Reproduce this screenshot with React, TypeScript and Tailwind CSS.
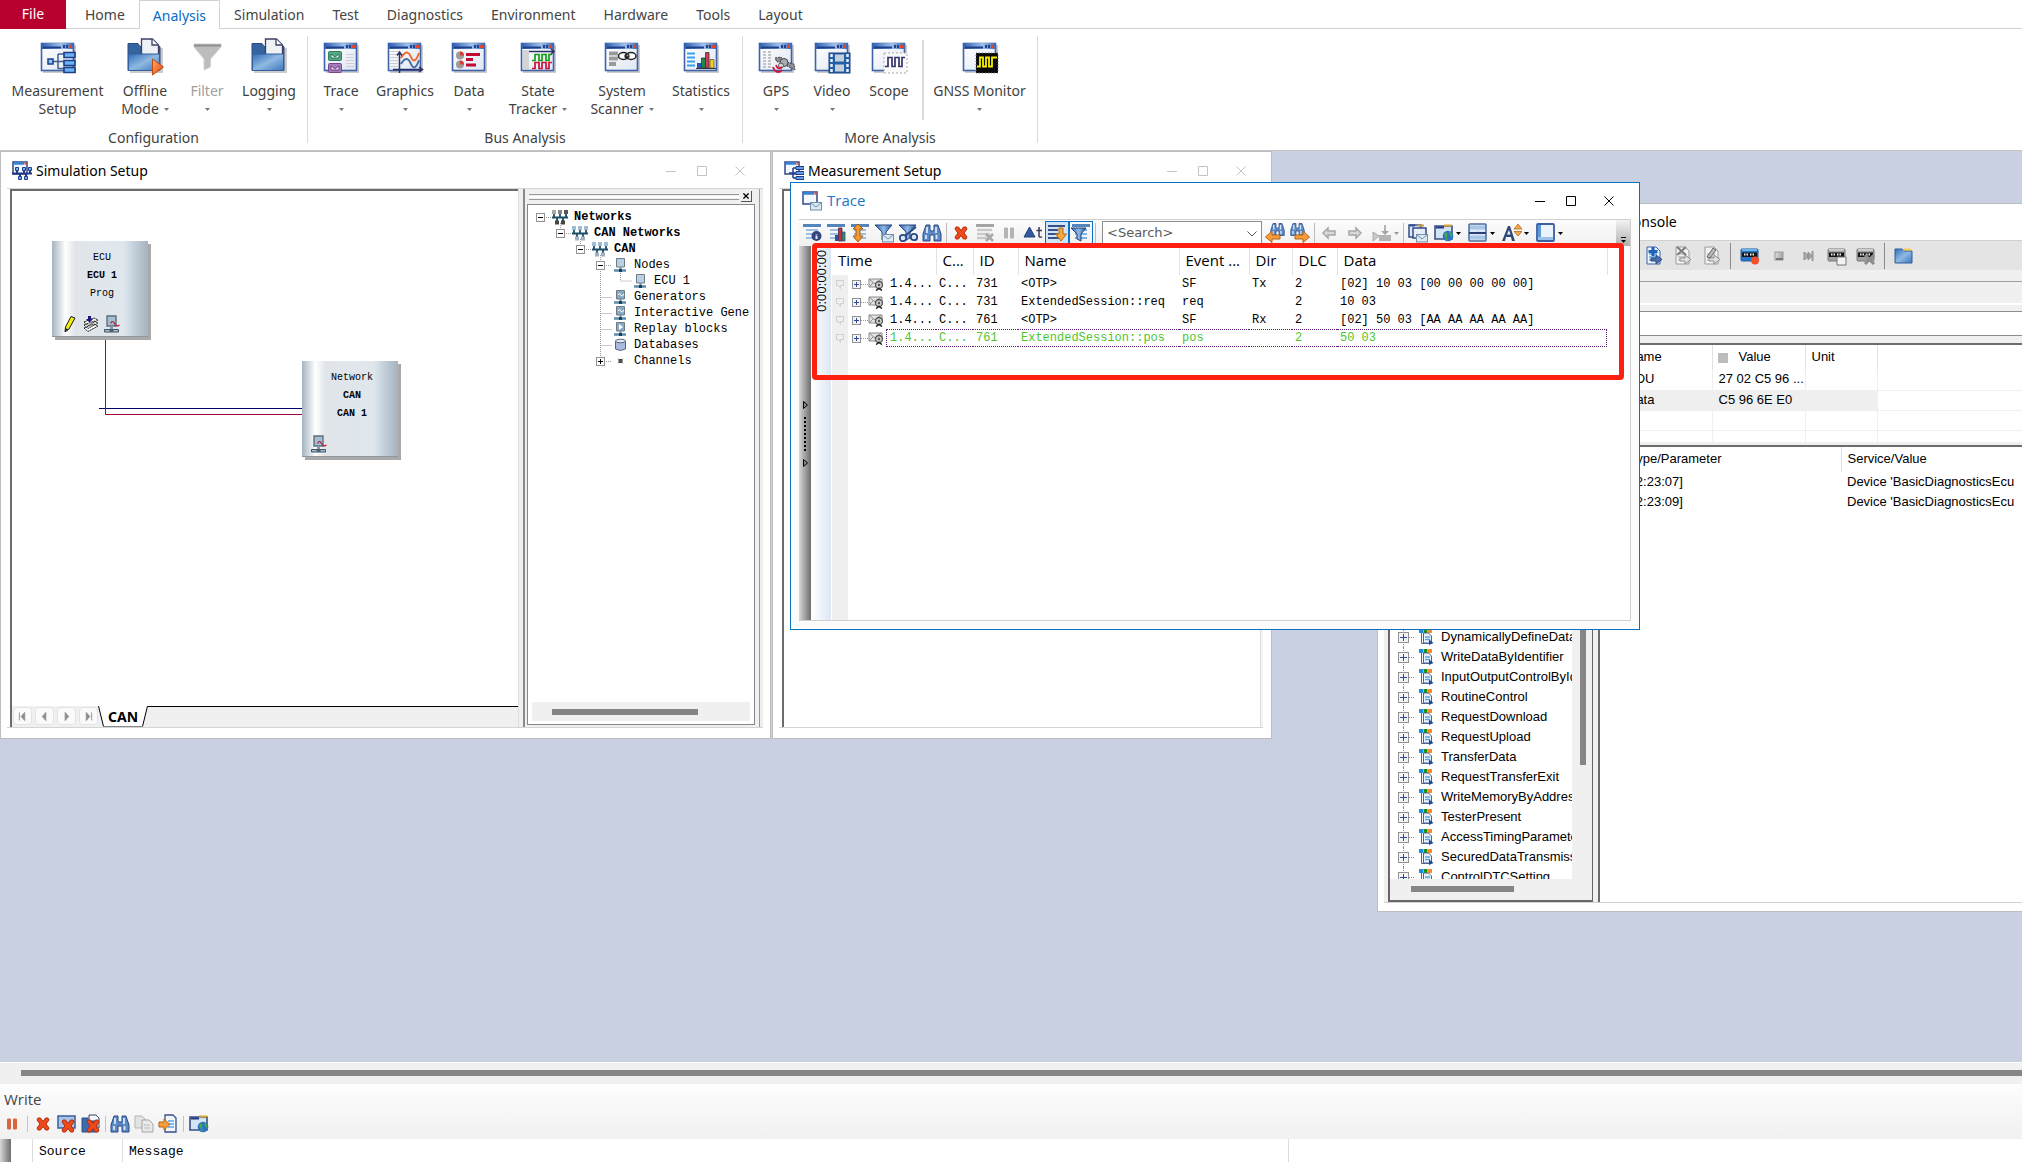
import React from 'react';

const RIBBON_TABS = ['Home', 'Analysis', 'Simulation', 'Test', 'Diagnostics', 'Environment', 'Hardware', 'Tools', 'Layout'];

const SERVICES = [
  'DynamicallyDefineDataIdentifier',
  'WriteDataByIdentifier',
  'InputOutputControlByIdentifier',
  'RoutineControl',
  'RequestDownload',
  'RequestUpload',
  'TransferData',
  'RequestTransferExit',
  'WriteMemoryByAddress',
  'TesterPresent',
  'AccessTimingParameter',
  'SecuredDataTransmission',
  'ControlDTCSetting',
];

interface TraceRow {
  id: string;
  name: string;
  event: string;
  dir: string;
  data: string;
  selected?: boolean;
}

const TRACE_ROWS: TraceRow[] = [
  { id: '731', name: '<OTP>', event: 'SF', dir: 'Tx', data: '[02] 10 03 [00 00 00 00 00]' },
  { id: '731', name: 'ExtendedSession::req', event: 'req', dir: '', data: '10 03' },
  { id: '761', name: '<OTP>', event: 'SF', dir: 'Rx', data: '[02] 50 03 [AA AA AA AA AA]' },
  { id: '761', name: 'ExtendedSession::pos', event: 'pos', dir: '', data: '50 03', selected: true },
];

// Shared gradients, referenced by id from the icons
const Gradients: React.FC = () => (
  <svg className="absolute h-0 w-0" aria-hidden="true">
    <defs>
      <linearGradient id="gBody" x1="0" y1="0" x2="1" y2="1">
        <stop offset="0" stopColor="#ffffff" />
        <stop offset="1" stopColor="#dfe6f4" />
      </linearGradient>
      <linearGradient id="gBar" x1="0" y1="0" x2="1" y2="0">
        <stop offset="0" stopColor="#2d5fae" />
        <stop offset="0.6" stopColor="#9ec0ea" />
        <stop offset="1" stopColor="#3c63ad" />
      </linearGradient>
      <linearGradient id="gBlue" x1="0" y1="0" x2="1" y2="1">
        <stop offset="0" stopColor="#2f6db8" />
        <stop offset="0.5" stopColor="#8fb9e2" />
        <stop offset="1" stopColor="#3c78bd" />
      </linearGradient>
      <linearGradient id="gFunnel" x1="0" y1="0" x2="1" y2="0">
        <stop offset="0" stopColor="#2f62a8" />
        <stop offset="0.5" stopColor="#8db8e6" />
        <stop offset="1" stopColor="#2c5a9e" />
      </linearGradient>
      <linearGradient id="gGray" x1="0" y1="0" x2="1" y2="0">
        <stop offset="0" stopColor="#dcdcdc" />
        <stop offset="1" stopColor="#a4a4a4" />
      </linearGradient>
      <linearGradient id="gOrange" x1="0" y1="0" x2="1" y2="1">
        <stop offset="0" stopColor="#ffb46a" />
        <stop offset="1" stopColor="#ea3c00" />
      </linearGradient>
    </defs>
  </svg>
);

type KidsProps = { children?: React.ReactNode };

const Ico: React.FC<KidsProps> = ({ children }) => (
  <svg viewBox="0 0 20 20" className="h-5 w-5 shrink-0" aria-hidden="true">{children}</svg>
);

const BigIco: React.FC<KidsProps> = ({ children }) => (
  <svg viewBox="0 0 38 34" className="h-[34px] w-[38px] shrink-0 overflow-visible" aria-hidden="true">{children}</svg>
);

const BigWindow: React.FC<KidsProps> = ({ children }) => (
  <BigIco>
    <rect x="4" y="5" width="33" height="28" fill="#000" opacity="0.2" />
    <rect x="2.5" y="3.5" width="32" height="27" fill="url(#gBody)" stroke="#3f62a8" strokeWidth="1.6" />
    <rect x="2" y="3" width="33" height="6" fill="url(#gBar)" />
    <path d="M4 7.5h18" stroke="#1e3f8c" strokeWidth="2" />
    <path d="M24 6.5h2M27 6.5h2" stroke="#23408a" strokeWidth="3" />
    <rect x="30" y="5" width="3" height="3" fill="#e2432a" />
    {children}
  </BigIco>
);

const BigFolder: React.FC<KidsProps> = ({ children }) => (
  <BigIco>
    <rect x="4" y="8" width="33" height="25" fill="#000" opacity="0.2" />
    <path d="M2 3.500h10l2 3h20v24H2z" fill="#35659f" stroke="#2b4c86" />
    <path d="M15.500 -1h11l6 6v15h-17z" fill="#eef1f6" stroke="#3b3f66" strokeWidth="1.300" />
    <path d="M26 -1v6h6" fill="#fff" stroke="#3b3f66" strokeWidth="1.300" />
    <path d="M2.500 14h31v16.500h-31z" fill="url(#gBlue)" stroke="#345e9c" />
    {children}
  </BigIco>
);

const MeasurementBig = () => (
  <BigWindow>
    <path d="M12 21.500h14M19 14v15M19 14h7M19 28.500h7" stroke="#44608f" strokeWidth="1.500" fill="none" />
    <rect x="9" y="19" width="5" height="5" fill="#8cc4f8" stroke="#1d3f86" strokeWidth="1.500" />
    <path d="M25 12.500h11v5H25zM25 20.500h11v5H25zM25 27.500h11v5H25z" fill="#6db2f6" stroke="#1d3f86" strokeWidth="1.600" />
  </BigWindow>
);

const OfflineBig = () => (
  <BigFolder>
    <path d="M26.500 19l11 8-11 8z" fill="url(#gOrange)" stroke="#c14a12" />
  </BigFolder>
);

const FilterBig = () => (
  <BigIco>
    <path d="M6 4h27v3L22.500 19v8L16 30V19L6 7z" fill="#bdbdbd" stroke="#d2d2d2" />
    <path d="M6 5.500h27" stroke="#8f8f8f" strokeWidth="2" />
  </BigIco>
);

const TraceBig = () => (
  <BigWindow>
    <path d="M24 14.500h8M24 17.500h8M24 20.500h8M24 23.500h8M24 26.500h8" stroke="#cfcfcf" />
    <rect x="6.500" y="11.500" width="13" height="9" rx="1" fill="#53a985" stroke="#2f7c5c" />
    <path d="M9 14l4 3 4-3v4H9z" fill="#d6f1e5" stroke="#235f48" strokeWidth="0.800" />
    <rect x="6.500" y="23.500" width="13" height="9" rx="1" fill="#a37bb8" stroke="#73488b" />
    <path d="M9 26l4 3 4-3v4H9z" fill="#f1e2f8" stroke="#5a336f" strokeWidth="0.800" />
  </BigWindow>
);

const GraphicsBig = () => (
  <BigWindow>
    <path d="M4 11.500h8M4 14.500h8M4 17.500h8M4 20.500h8M4 23.500h8M4 26.500h8" stroke="#c9ccd3" />
    <path d="M15 18c5-8 8-6 10-1s5 5 8-4" fill="none" stroke="#f36a2a" strokeWidth="2" />
    <path d="M15 24c5-8 8-5 10 0s5 5 8-4" fill="none" stroke="#4a6da2" strokeWidth="2" />
    <path d="M13.500 33V13M11 15.500l2.500-3.500 2.500 3.500M7 29.500h28M33 27l3.500 2.500L33 32" fill="none" stroke="#2a2f68" strokeWidth="1.500" />
  </BigWindow>
);

const DataBig = () => (
  <BigWindow>
    <circle cx="10" cy="15.500" r="4" fill="#9c9c9c" /><path d="M10 15.500v-4a4 4 0 0 1 4 4z" fill="#d93a3a" />
    <circle cx="10" cy="24.500" r="4" fill="#9c9c9c" /><path d="M10 24.500v-4a4 4 0 0 1 4 4z" fill="#d93a3a" />
    <path d="M16 14.500h14M16 19.500h7M16 25h10" stroke="#c00a32" strokeWidth="3" />
  </BigWindow>
);

const StateBig = () => (
  <BigWindow>
    <rect x="4" y="10" width="6" height="19" fill="#d4d4d4" />
    <path d="M10 11.500h24M32 9l3 2.500-3 2.500" stroke="#2a2f68" strokeWidth="1.500" fill="none" />
    <path d="M13 20.500h3v-6h4v6h3v-6h4v6h3v-6h3" stroke="#12a012" strokeWidth="1.700" fill="none" />
    <path d="M13 28.500h3v-6h4v6h3v-6h4v6h3v-6h3" stroke="#cb1038" strokeWidth="1.700" fill="none" />
  </BigWindow>
);

const ScannerBig = () => (
  <BigWindow>
    <path d="M6 13.500h9M6 18.500h9M6 24h7" stroke="#9a9a9a" strokeWidth="4" />
    <path d="M6 16h9M6 21h9" stroke="#ddd" />
    <ellipse cx="20.500" cy="16" rx="5" ry="3.500" fill="#fff" stroke="#222" strokeWidth="1.500" />
    <ellipse cx="28" cy="16" rx="5" ry="3.500" fill="#fff" stroke="#222" strokeWidth="1.500" />
    <circle cx="24" cy="16" r="2.600" fill="#222" /><circle cx="24.500" cy="15.500" r="1" fill="#999" />
  </BigWindow>
);

const StatisticsBig = () => (
  <BigWindow>
    <path d="M5 13.500h8M5 17.500h8M5 21.500h8M5 25.500h8" stroke="#3aa0e8" strokeWidth="1.800" />
    <path d="M15 23h4.500v5H15z" fill="#2757a8" /><path d="M19.500 18h4v10h-4z" fill="#1d8a4c" stroke="#333" strokeWidth="0.800" />
    <path d="M23.500 12.500h3.500V28h-3.500z" fill="#d0405a" stroke="#333" strokeWidth="0.800" /><path d="M28 19.500h4V28h-4z" fill="#f2d314" stroke="#555" strokeWidth="0.800" />
    <path d="M14 28.500h20" stroke="#333" />
  </BigWindow>
);

const GpsBig = () => (
  <BigWindow>
    <path d="M7.500 11v17M12.500 11v17" stroke="#c4c4c4" strokeWidth="3" strokeDasharray="2 1" />
    <path d="M18 18l6-1 2 4-6 1zM30 22l7 2 1 6-8-4z" fill="#8b8b93" stroke="#444" strokeDasharray="2 1" />
    <circle cx="27" cy="22.500" r="4" fill="#a9abb4" stroke="#444" /><circle cx="24" cy="25.500" r="2.500" fill="#d6d6da" stroke="#555" />
    <path d="M16 27c2 6 6 6 9 3M19 25c1 4 4 4 6 2" stroke="#cf1640" strokeWidth="1.800" fill="none" />
  </BigWindow>
);

const VideoBig = () => (
  <BigWindow>
    <rect x="16" y="13" width="21" height="20" fill="#2360a8" stroke="#1d4280" />
    <path d="M22 14.500h9v7h-9zM22 24.500h9v7h-9z" fill="#c5cfda" />
    <path d="M18.500 14v18M34.500 14v18" stroke="#e8f0fa" strokeWidth="2.500" strokeDasharray="3 2" />
  </BigWindow>
);

const ScopeBig = () => (
  <BigWindow>
    <rect x="14" y="13" width="23" height="20" fill="#fafafa" stroke="#aaa" strokeDasharray="2 2" />
    <path d="M15 26.500h3v-9h4v9h3v-9h4v9h3v-9h3" stroke="#34346a" strokeWidth="1.700" fill="none" />
  </BigWindow>
);

const GnssBig = () => (
  <BigWindow>
    <rect x="15" y="13" width="22" height="20" fill="#0a0a0a" stroke="#777" strokeDasharray="1 2" />
    <path d="M16 26.500h3v-9h3v9h3v-9h3v9h3v-9h5M25 17.500v9M31 17.500v9" stroke="#f6ee00" strokeWidth="1.800" fill="none" />
  </BigWindow>
);

interface RibbonItem {
  label: string[];
  width: string;
  icon: React.ReactNode;
  arrow?: boolean;
  disabled?: boolean;
}

const CONFIGURATION: RibbonItem[] = [
  { label: ['Measurement', 'Setup'], width: 'w-[115px]', icon: <MeasurementBig /> },
  { label: ['Offline', 'Mode'], width: 'w-[60px]', icon: <OfflineBig />, arrow: true },
  { label: ['Filter'], width: 'w-16', icon: <FilterBig />, arrow: true, disabled: true },
  { label: ['Logging'], width: 'w-[60px]', icon: <BigFolder />, arrow: true },
];

const BUS_ANALYSIS: RibbonItem[] = [
  { label: ['Trace'], width: 'w-[66px]', icon: <TraceBig />, arrow: true },
  { label: ['Graphics'], width: 'w-[62px]', icon: <GraphicsBig />, arrow: true },
  { label: ['Data'], width: 'w-[66px]', icon: <DataBig />, arrow: true },
  { label: ['State', 'Tracker'], width: 'w-[72px]', icon: <StateBig />, arrow: true },
  { label: ['System', 'Scanner'], width: 'w-24', icon: <ScannerBig />, arrow: true },
  { label: ['Statistics'], width: 'w-[62px]', icon: <StatisticsBig />, arrow: true },
];

const MORE_ANALYSIS: RibbonItem[] = [
  { label: ['GPS'], width: 'w-[60px]', icon: <GpsBig />, arrow: true },
  { label: ['Video'], width: 'w-[52px]', icon: <VideoBig />, arrow: true },
  { label: ['Scope'], width: 'w-[62px]', icon: <ScopeBig /> },
];

const Caret: React.FC<{ className?: string }> = ({ className = 'text-[#777]' }) => (
  <svg viewBox="0 0 5 3" className={`h-[3px] w-[5px] shrink-0 ${className}`} aria-hidden="true"><path d="M0 0h5L2.500 3z" fill="currentColor" /></svg>
);

const RibbonButton: React.FC<{ item: RibbonItem }> = ({ item }) => (
  <button
    type="button"
    disabled={item.disabled}
    className={`flex h-[90px] flex-col items-center whitespace-nowrap leading-[18px] ${item.width} ${item.disabled ? 'text-[#a0a0a0]' : 'text-[#3f3f3f]'}`}
  >
    {item.icon}
    <span className="mt-2">{item.label[0]}</span>
    <span className="flex h-[18px] items-center gap-[5px]">
      {item.label[1]}
      {item.arrow && <Caret />}
    </span>
  </button>
);

const RibbonGroup: React.FC<{ title: string; items: RibbonItem[]; className?: string; children?: React.ReactNode }> = ({ title, items, className = '', children }) => (
  <div className="flex flex-col items-center border-r border-[#dadada]">
    <div className={`flex pt-1 ${className}`}>
      {items.map((item) => <RibbonButton key={item.label[0]} item={item} />)}
      {children}
    </div>
    <div className="leading-[16px] text-[#3f3f3f]">{title}</div>
  </div>
);

const Ribbon: React.FC = () => (
  <header className="shrink-0 bg-white">
    <nav className="flex h-[29px] text-[#444]">
      <button type="button" className="w-[66px] border-b border-[#b8002e] bg-[#b8002e] text-white">File</button>
      <div className="w-[5px] border-b border-[#d2d2d2]" />
      {RIBBON_TABS.map((tab) =>
        tab === 'Analysis' ? (
          <button key={tab} type="button" className="border border-b-0 border-[#d2d2d2] px-[13px] pt-px text-[#0a6cc4]">{tab}</button>
        ) : (
          <button key={tab} type="button" className="border-b border-[#d2d2d2] px-[14px] pt-[2px]">{tab}</button>
        )
      )}
      <div className="flex-1 border-b border-[#d2d2d2]" />
    </nav>
    <div className="flex h-[122px] border-b border-[#c4c4c4] py-[7px]">
      <RibbonGroup title="Configuration" items={CONFIGURATION} className="pr-2" />
      <RibbonGroup title="Bus Analysis" items={BUS_ANALYSIS} className="pr-[10px]" />
      <RibbonGroup title="More Analysis" items={MORE_ANALYSIS} className="pr-1 pl-[3px]">
        <div className="mx-[2px] h-20 w-[2px] bg-[#dadada]" />
        <RibbonButton item={{ label: ['GNSS Monitor'], width: 'w-[107px]', icon: <GnssBig />, arrow: true }} />
      </RibbonGroup>
    </div>
  </header>
);

// --- small icons -----------------------------------------------------------

const SmallWindow: React.FC<KidsProps> = ({ children }) => (
  <Ico>
    <path d="M1 1h14v12H1z" fill="#f4f8fd" stroke="#33478a" strokeWidth="1.500" />
    <path d="M2 2.500h10" stroke="#2f86d8" strokeWidth="2.500" />
    <path d="M12.500 2.500h2" stroke="#f0502c" strokeWidth="2.500" />
    {children}
  </Ico>
);

const Envelope = ({ x = 8, y = 11 }: { x?: number; y?: number }) => (
  <g transform={`translate(${x} ${y})`}>
    <rect x="0.500" y="0.500" width="11" height="7.500" fill="#dce9f3" stroke="#7090ac" />
    <path d="M1 1l5 4 5-4" fill="none" stroke="#7090ac" />
  </g>
);

const SimulationIcon = () => (
  <SmallWindow>
    <path d="M0 12.500h20M5 8v4M12 8v4M18 8v4M8 12v4M14 12v4" stroke="#243c86" strokeWidth="2" />
    <path d="M3.500 6.500h3v3h-3zM10.500 6.500h3v3h-3zM16.500 6.500h3v3h-3zM6.500 15.500h3v3h-3zM12.500 15.500h3v3h-3z" fill="#6fb3ef" stroke="#243c86" />
  </SmallWindow>
);

const MeasurementIcon = () => (
  <SmallWindow>
    <path d="M5 12h7M9 7v10M9 7h4M9 17h4" stroke="#243c86" strokeWidth="1.500" fill="none" />
    <path d="M12 5.500h8v3h-8zM12 10.500h8v3h-8zM12 15.500h8v3h-8z" fill="#5da2e6" stroke="#243c86" />
  </SmallWindow>
);

const TraceIcon = () => (
  <SmallWindow><Envelope /></SmallWindow>
);

const Lines = ({ c = '#9cc0e4' }: { c?: string }) => (
  <>
    <path d="M1 2.500h18" stroke="#5585bd" strokeWidth="3" />
    <path d="M4 7h12M4 11h12M4 15h12" stroke={c} strokeWidth="2" />
  </>
);

const ListInfoIcon = () => (
  <Ico><Lines /><circle cx="14.500" cy="13" r="5" fill="#33457f" /><path d="M14.500 11.500v1M14.500 13v3" stroke="#e6eefa" strokeWidth="2" /></Ico>
);
const ListChartIcon = () => (
  <Ico><Lines /><path d="M9 12h3.500v6H9z" fill="#2757a8" /><path d="M12.500 5H16v13h-3.500z" fill="#c23346" stroke="#4a2340" strokeWidth="0.800" /><path d="M16 9h3v9h-3z" fill="#3c8a54" stroke="#2b4f8e" strokeWidth="0.800" /></Ico>
);
const ListArrowIcon = () => (
  <Ico><Lines /><path d="M8 1l5 5h-3v7h3l-5 6-5-6h3V6H3z" fill="#f39a32" stroke="#a85c10" /></Ico>
);
const Funnel = () => <path d="M1 2h17l-6 7v6l-4 2V9z" fill="url(#gFunnel)" stroke="#24457c" />;
const FunnelMailIcon = () => <Ico><Funnel /><Envelope /></Ico>;
const FunnelLoopIcon = () => (
  <Ico><Funnel /><circle cx="5" cy="15" r="3.200" fill="#dde8f5" stroke="#2a4a88" strokeWidth="1.800" /><circle cx="16" cy="14" r="3.200" fill="#dde8f5" stroke="#2a4a88" strokeWidth="1.800" /><path d="M7 13L18 4" stroke="#2a4a88" strokeWidth="1.800" /></Ico>
);
const Binoculars = () => (
  <>
    <path d="M4 2h4v5l1 1h2l1-1V2h4l3 9v7h-7v-6H8v6H1v-7z" fill="#5c88c4" stroke="#2a4a86" />
    <path d="M5 4v6M14 4v6M4 12v4M14.500 12v4" stroke="#d6e7f8" strokeWidth="1.800" />
  </>
);
const BinocularsIcon = () => <Ico><Binoculars /></Ico>;
const SearchPrevIcon = () => (
  <Ico><g transform="translate(5 -1) scale(0.75)"><Binoculars /></g><path d="M0.500 14l6.500-6v4h8v4H7v3.500z" fill="#f79c38" stroke="#b2631a" /></Ico>
);
const SearchNextIcon = () => (
  <Ico><g transform="translate(0 -1) scale(0.75)"><Binoculars /></g><path d="M19.500 14L13 8v4H5v4h8v3.500z" fill="#f79c38" stroke="#b2631a" /></Ico>
);
const CrossShape = ({ c = '#ee4a1c', s = '#b52a08' }: { c?: string; s?: string }) => (
  <path d="M5 4l2.500 0L10 7.500 12.500 4H15l1 2-3 4 3 4-1 2h-2.500L10 12.500 7.500 16H5l-1-2 3-4-3-4z" fill={c} stroke={s} />
);
const CrossIcon = () => <Ico><CrossShape /></Ico>;
const ListCrossIcon = () => (
  <Ico><path d="M1 2.500h18" stroke="#a4a4a4" strokeWidth="3" /><path d="M2 7h15M2 11h13M2 15h10" stroke="#c9c9c9" strokeWidth="2.500" /><path d="M11 11l7 7M18 11l-7 7" stroke="#a8a8a8" strokeWidth="2.500" /></Ico>
);
const PauseIcon = ({ c }: { c: string }) => (
  <Ico><path d="M5.500 5h3v10h-3zM11.500 5h3v10h-3z" fill={c} stroke={c} /></Ico>
);
const DeltaIcon = () => (
  <Ico><path d="M1 14L6.500 4 12 14z" fill="#345a9c" stroke="#24437c" /><path d="M16 4v9q0 1.500 3 1M13.500 7.500H19" fill="none" stroke="#3a3a55" strokeWidth="1.500" /></Ico>
);
const ListDownIcon = () => (
  <Ico><path d="M1 3h17M1 7h10M1 11h10M1 15h12" stroke="#3b4f86" strokeWidth="1.800" /><path d="M12 5h4v6h3.500L14 18l-5.500-7H12z" fill="#f9a93c" stroke="#b66a18" /></Ico>
);
const FunnelListIcon = () => (
  <Ico><Lines c="#7db1ea" /><path d="M0 5h15l-5 6v7l-4-2v-5z" fill="url(#gFunnel)" stroke="#24457c" /></Ico>
);
const GrayArrow = ({ flip = false }: { flip?: boolean }) => (
  <Ico><path d={flip ? 'M16 10l-5-5v3H4v4h7v3z' : 'M4 10l5-5v3h7v4H9v3z'} fill="#d8d8d8" stroke="#a6a6a6" strokeWidth="1.500" /></Ico>
);
const MarkerIcon = () => (
  <Ico><path d="M1 9l6 4-6 5z" fill="#c9c9c9" stroke="#aaa" /><path d="M7 12h12v6H7zM12 2h2v6h-2z" fill="#b4b4b4" /><path d="M9 8h8l-4 4z" fill="#a4a4a4" /></Ico>
);
const WindowsMailIcon = () => (
  <Ico><path d="M1 2h12v12H1z" fill="#dbe9f8" stroke="#344a86" strokeWidth="1.500" /><path d="M5 5h13v10H5z" fill="#e6f0fa" stroke="#344a86" strokeWidth="1.500" /><path d="M2 2.500h5" stroke="#2c4a90" strokeWidth="2" /><path d="M9 2.500h7" stroke="#c6a03c" strokeWidth="2" /><Envelope /></Ico>
);
const FolderGlobeIcon = () => (
  <Ico><path d="M1 3h17v13H1z" fill="#d3e3f6" stroke="#3a4f88" strokeWidth="1.600" /><path d="M2 4.500h8" stroke="#26397c" strokeWidth="2" /><path d="M10 2.500h8" stroke="#d8a633" strokeWidth="2" /><circle cx="14" cy="13" r="5.300" fill="#2c74c0" /><path d="M10 11c3-3 4 0 3 2s2 4 0 5M15 8c2 2 4 3 3 6l-2-2z" fill="#49ab4b" /></Ico>
);
const SplitIcon = () => (
  <Ico><rect x="1" y="1" width="17" height="17" rx="1" fill="#dde9f6" stroke="#52709f" strokeWidth="1.600" /><path d="M2 4.500h15M2 14.500h15" stroke="#a9c6e6" strokeWidth="4" /><path d="M1 10h17" stroke="#2a3f78" strokeWidth="2" /><path d="M9.500 8.500L12 10l-2.500 1.500" fill="#2a3f78" /></Ico>
);
const FontIcon = () => (
  <Ico><path d="M0 18L6 3h2l5 15h-3l-1-4H4l-1 4zM5 11.500h3.500L7 7z" fill="#2f4779" /><path d="M12 6l4-5 4 5zM12 8.500h8l-4 4.500z" fill="#f3a64a" stroke="#b66a18" strokeWidth="0.800" /></Ico>
);
const PanelIcon = () => (
  <Ico><rect x="1" y="1" width="17" height="17" rx="1" fill="#eaf3fb" stroke="#3c5fa0" strokeWidth="1.800" /><path d="M3.500 2v15" stroke="#5d9ad6" strokeWidth="3" /><path d="M2 15.500h15" stroke="#9cc2ea" strokeWidth="3" /></Ico>
);

const DocIcon = ({ kind }: { kind: 'plus' | 'cross' | 'pen' }) => {
  const on = kind === 'plus';
  return (
    <Ico>
      <path d="M3 1h9l4 4v13H3z" fill={on ? '#eef5fc' : '#f3f3f3'} stroke={on ? '#3a62a6' : '#9b9b9b'} />
      <path d="M5 8h8M5 11h8M5 14h6" stroke={on ? '#57a5e6' : '#bcbcbc'} strokeWidth="1.500" />
      <path d="M12 9l6 4.500-6 4.500v-3H7v-3h5z" fill={on ? '#4a6ea8' : '#e2e2e2'} stroke={on ? '#2d4a80' : '#8c8c8c'} />
      {kind === 'plus' && <path d="M9 1v9M4.500 5.500h9" stroke="#1f62b6" strokeWidth="3" />}
      {kind === 'cross' && <path d="M4 1l9 8M13 1L4 9" stroke="#7d7d7d" strokeWidth="2" />}
      {kind === 'pen' && <path d="M5 11L11 2l3 2-6 8z" fill="#bbb" stroke="#666" />}
    </Ico>
  );
};

const TapeIcon = ({ kind }: { kind: 'record' | 'save' | 'cross' }) => {
  const on = kind === 'record';
  return (
    <Ico>
      <rect x="1" y="3" width="17" height="12" rx="1" fill={on ? '#2577c8' : '#a2a2a2'} stroke={on ? '#1e5c9e' : '#777'} />
      <path d="M2 4h15" stroke={on ? '#6fb3ee' : '#ccc'} strokeWidth="2" />
      <rect x="2" y="6.500" width="15" height="4.500" fill="#151515" />
      <path d="M4 8.500h4M10 8.500h4" stroke="#eee" strokeWidth="2" strokeDasharray="1.500 1" />
      {kind === 'record' && <circle cx="15" cy="14.500" r="4" fill="#f4502a" />}
      {kind === 'save' && <path d="M10 11h9v8h-9z" fill="#f3f3f3" stroke="#777" />}
      {kind === 'cross' && <path d="M9 9l9 9M18 9l-9 9" stroke="#8c8c8c" strokeWidth="3" />}
    </Ico>
  );
};

const FolderIcon = () => (
  <Ico><path d="M1 3h16v3H1z" fill="#d9b04a" /><path d="M1 3h7l2 2h8v12H1z" fill="url(#gBlue)" stroke="#2d5c9c" /><path d="M9 3.500h8" stroke="#f2cf62" strokeWidth="2" /></Ico>
);

const NodeIcon = ({ kind = 'plain' }: { kind?: 'plain' | 'wave' | 'play' }) => (
  <svg viewBox="0 0 16 16" className="h-4 w-4 shrink-0" aria-hidden="true">
    <path d="M4.500 1.500h8v8.500h-8z" fill={kind === 'plain' ? '#b9d0e2' : '#86a9c4'} stroke="#6e7a86" />
    <path d="M8.500 10v3" stroke="#7c8d9b" strokeWidth="2" />
    <path d="M2 13.500h12" stroke="#5b8cab" strokeWidth="2.500" />
    <path d="M7 13.500h3" stroke="#14405c" strokeWidth="3" />
    {kind === 'wave' && <path d="M6 6q1.500-2.500 3 0t3-1" fill="none" stroke="#fff" />}
    {kind === 'play' && <path d="M7 3l4 3-4 3z" fill="#fff" />}
  </svg>
);

const NetIcon = ({ dark = false }: { dark?: boolean }) => (
  <svg viewBox="0 0 16 16" className="h-4 w-4 shrink-0" aria-hidden="true">
    <path d="M2 5v3M8 5v3M14 5v3M0 8.500h16M5 9v3M11 9v3" stroke="#1f4e68" strokeWidth="1.800" />
    <path d="M0 1h4v4H0z" fill={dark ? '#aaa' : '#9dbdd6'} /><path d="M6 1h4v4H6z" fill={dark ? '#888' : '#9dbdd6'} /><path d="M12 1h4v4h-4z" fill={dark ? '#555' : '#9dbdd6'} />
    <path d="M3 11.500h4v4H3zM9 11.500h4v4H9z" fill={dark ? '#444' : '#9fb2c4'} />
  </svg>
);

const DatabaseIcon = () => (
  <svg viewBox="0 0 16 16" className="h-4 w-4 shrink-0" aria-hidden="true">
    <path d="M3.500 4v8q5 3 10 0V4z" fill="#a9bbdd" stroke="#5b6580" /><ellipse cx="8.500" cy="4" rx="5" ry="1.800" fill="#e0e8f5" stroke="#5b6580" />
  </svg>
);

const ChannelIcon = () => (
  <svg viewBox="0 0 16 16" className="h-4 w-4 shrink-0" aria-hidden="true">
    <path d="M6.500 6h4v4h-4z" fill="#333" /><path d="M6 5.500l5 5M11 5.500l-5 5" stroke="#777" strokeWidth="0.800" />
  </svg>
);

const ComputerIcon = () => (
  <svg viewBox="0 0 18 18" className="h-[18px] w-[18px] shrink-0" aria-hidden="true">
    <path d="M4 1h9v10H4z" fill="#a3bfd3" stroke="#5f6e7b" strokeWidth="1.400" />
    <path d="M8.500 11v3" stroke="#8697a5" strokeWidth="3" /><path d="M1.500 14.500h14v2.500h-14z" fill="#9cc0dc" stroke="#44525f" />
    <path d="M6.500 14.500h4V17h-4z" fill="#4e6475" /><path d="M7.500 8.500q2-4 4 0t5 1.500" fill="none" stroke="#b51a35" strokeWidth="1.200" />
  </svg>
);

const PencilIcon = () => (
  <svg viewBox="0 0 18 18" className="h-[18px] w-[18px] shrink-0" aria-hidden="true">
    <path d="M10 1.500l4 1.500-6 11-4 3 .5-5z" fill="#f4ea10" stroke="#1b1b1b" /><path d="M4 17l.5-4 3 1.500z" fill="#222" />
  </svg>
);

const StackIcon = () => (
  <svg viewBox="0 0 18 18" className="h-[18px] w-[18px] shrink-0" aria-hidden="true">
    <path d="M2 13l10-4 4 2-10 5.500zM2 10l10-4 4 2-10 5.500zM2 7l10-4 4 2-10 5.500z" fill="#fff" stroke="#222" strokeDasharray="2 0.500" />
    <path d="M6 1h3v3h2L7.500 7.500 4 4h2z" fill="#21147a" />
  </svg>
);

const ServiceIcon = () => (
  <svg viewBox="0 0 16 16" className="h-4 w-4 shrink-0" aria-hidden="true">
    <path d="M1 0h4v4H1z" fill="#1d8be0" /><path d="M5.500 0h4v4h-4z" fill="#149614" /><path d="M10 0h4v4h-4z" fill="#f78c2c" />
    <path d="M5.500 4h5l3 3v7h-8z" fill="#eef4fb" stroke="#4a659a" /><path d="M7 8h5M7 10.500h5" stroke="#57a5e6" strokeWidth="1.500" />
    <path d="M3.500 4v10.500h8" fill="none" stroke="#4a659a" /><path d="M11 10.500l4.500 3.500-4.500 2z" fill="#1f4a92" />
  </svg>
);

const TraceRowIcon = () => (
  <svg viewBox="0 0 16 14" className="h-[14px] w-4 shrink-0" aria-hidden="true">
    <path d="M1 2h13v8H1z" fill="#e4e4e4" stroke="#8a8a8a" /><path d="M1 2l6 5 6-5M1 10l4-4" fill="none" stroke="#8a8a8a" />
    <circle cx="11" cy="8" r="3.500" fill="#ccc" stroke="#555" strokeWidth="1.300" /><circle cx="11" cy="8" r="1.200" fill="#555" /><path d="M8 13.500l3-2 3 2" fill="none" stroke="#222" strokeWidth="1.500" />
  </svg>
);

const Expander = ({ open = false, blue = false }: { open?: boolean; blue?: boolean }) => (
  <svg viewBox="0 0 9 9" className="h-[9px] w-[9px] shrink-0" aria-hidden="true">
    <rect x="0.500" y="0.500" width="8" height="8" fill={blue ? '#f4f4f4' : '#fff'} stroke="#919191" />
    <path d={open ? 'M2 4.500h5' : 'M2 4.500h5M4.500 2v5'} stroke={blue ? '#2b4a9b' : '#000'} />
  </svg>
);

const ServiceExpander = () => (
  <svg viewBox="0 0 11 11" className="relative h-[11px] w-[11px] shrink-0" aria-hidden="true">
    <rect x="0.500" y="0.500" width="10" height="10" fill="#f4f4f4" stroke="#919191" />
    <path d="M2 5.500h7M5.500 2v7" stroke="#2b4a9b" />
  </svg>
);

// --- window parts ----------------------------------------------------------

const WindowControls: React.FC<{ className: string }> = ({ className }) => (
  <div className={`ml-auto flex items-center ${className}`}>
    {[
      { name: 'Minimize', d: 'M0 5.500h10', width: 'w-[31px]' },
      { name: 'Maximize', d: 'M0.500 0.500h9v9h-9z', width: 'w-[31px]' },
      { name: 'Close', d: 'M0.500 0.500l9 9M9.500 0.500l-9 9', width: 'w-[46px]' },
    ].map((c) => (
      <button key={c.name} type="button" aria-label={c.name} className={`flex justify-center ${c.width}`}>
        <svg viewBox="0 0 10 10" className="h-[10px] w-[10px]"><path d={c.d} fill="none" stroke="currentColor" /></svg>
      </button>
    ))}
  </div>
);

const ToolButton: React.FC<{ label: string; className?: string; children: React.ReactNode }> = ({ label, className = 'w-6', children }) => (
  <button type="button" aria-label={label} className={`flex h-6 shrink-0 items-center justify-center gap-[2px] ${className}`}>{children}</button>
);

const Sep: React.FC<{ className?: string }> = ({ className = 'mx-[2px] h-5 bg-[#bdbdbd]' }) => <div className={`w-px shrink-0 ${className}`} />;

interface TreeRow {
  label: string;
  indent: string;
  icon: React.ReactNode;
  expander?: 'open' | 'closed';
  bold?: boolean;
}

const TREE: TreeRow[] = [
  { label: 'Networks', indent: 'pl-1', icon: <NetIcon dark />, expander: 'open', bold: true },
  { label: 'CAN Networks', indent: 'pl-6', icon: <NetIcon />, expander: 'open', bold: true },
  { label: 'CAN', indent: 'pl-11', icon: <NetIcon />, expander: 'open', bold: true },
  { label: 'Nodes', indent: 'pl-16', icon: <NodeIcon />, expander: 'open' },
  { label: 'ECU 1', indent: 'pl-[84px]', icon: <NodeIcon /> },
  { label: 'Generators', indent: 'pl-16', icon: <NodeIcon kind="wave" /> },
  { label: 'Interactive Generators', indent: 'pl-16', icon: <NodeIcon kind="wave" /> },
  { label: 'Replay blocks', indent: 'pl-16', icon: <NodeIcon kind="play" /> },
  { label: 'Databases', indent: 'pl-16', icon: <DatabaseIcon /> },
  { label: 'Channels', indent: 'pl-16', icon: <ChannelIcon />, expander: 'closed' },
];

const NetworkTree: React.FC = () => (
  <ul className="relative flex-1 overflow-hidden pt-1 font-['Liberation_Mono',monospace] text-xs leading-4">
    <svg className="absolute top-0 left-0 h-44 w-28" aria-hidden="true">
      <path d="M28.500 18v10M48.500 34v10M68.500 50v102M88.500 66v10h12M68.500 92.500h12M68.500 108.500h12M68.500 124.500h12M68.500 140.500h12" stroke="#999" strokeDasharray="1 1" fill="none" />
    </svg>
    {TREE.map((row) => (
      <li key={row.label} className={`relative flex h-4 items-center whitespace-nowrap ${row.indent} ${row.bold ? 'font-bold' : ''}`}>
        <span className="flex w-4 shrink-0 items-center">
          {row.expander && <Expander open={row.expander === 'open'} />}
          {row.expander && <span className="ml-px w-[5px] border-t border-dotted border-[#999]" />}
        </span>
        {row.icon}
        <span className="ml-[6px]">{row.label}</span>
      </li>
    ))}
  </ul>
);

const NODE_BOX = 'absolute flex h-24 w-24 flex-col items-center border-b border-[#8f979e] bg-[linear-gradient(90deg,#a4b4c0_0%,#ffffff_14%,#e1e5ea_24%,#dfe7ed_75%,#c6d3dd_84%,#a6b3bf_100%)] shadow-[3px_3px_0_0_#a9a9a9]';

const SimulationCanvas: React.FC = () => (
  <div className="relative flex-1 overflow-hidden bg-white font-['Liberation_Mono',monospace] text-[10px] leading-[18px]">
    <svg className="absolute inset-0 h-full w-full" aria-hidden="true">
      <path d="M87 217.500h206" stroke="#000066" />
      <path d="M93.500 148v75.500h200" stroke="#a5063a" fill="none" />
    </svg>
    <div className={`${NODE_BOX} top-[50px] left-10`}>
      <div className="mt-2 pl-1 text-center">ECU<br /><b>ECU 1</b><br />Prog</div>
      <div className="absolute bottom-[3px] left-[9px] flex gap-[3px]"><PencilIcon /><StackIcon /><ComputerIcon /></div>
    </div>
    <div className={`${NODE_BOX} top-[170px] left-[290px]`}>
      <div className="mt-2 pl-1 text-center">Network<br /><b>CAN</b><br /><b>CAN 1</b></div>
      <div className="absolute bottom-[3px] left-2"><ComputerIcon /></div>
    </div>
  </div>
);

const SheetTabs: React.FC = () => (
  <div className="flex h-[21px] shrink-0 bg-[#f0f0f0]">
    <div className="flex gap-[3px] py-px pl-px">
      {['M6 5v9M12 5v9L8 9.500z', 'M11 5v9L7 9.500z', 'M8 5v9l4-4.500z', 'M7 5v9l4-4.500zM13 5v9'].map((d, i) => (
        <button key={i} type="button" aria-label={['First', 'Previous', 'Next', 'Last'][i]} className="h-[18px] w-[19px] rounded-sm border border-[#e3e3e3] bg-[#fafafa]">
          <svg viewBox="0 0 19 18"><path d={d} fill="#8d8d8d" stroke="#8d8d8d" /></svg>
        </button>
      ))}
    </div>
    <div className="relative w-[50px]">
      <svg viewBox="0 0 50 21" className="absolute inset-0" aria-hidden="true"><path d="M0 0l6 20.500h38L50 0z" fill="#fff" /><path d="M0.500 0l5 20.500M44.500 20.500l5-20.500" stroke="#000" /><path d="M6 20.500h39" stroke="#888" /></svg>
      <button type="button" className="relative w-full text-center leading-[22px] font-bold">CAN</button>
    </div>
    <div className="flex-1 border-t border-black" />
  </div>
);

const SimulationWindow: React.FC = () => (
  <section className="absolute top-0 left-0 flex h-[588px] w-[771px] flex-col border border-[#bdbdbd] bg-white">
    <div className="flex h-9 items-center pl-[11px] pt-px">
      <SimulationIcon />
      <h2 className="ml-1 text-black">Simulation Setup</h2>
      <WindowControls className="pr-[7px] text-[#c4c4c4]" />
    </div>
    <div className="mr-[7px] mb-[10px] ml-[6px] flex flex-1 border-t border-b border-[#d4d4d4] pl-[3px]">
      <div className="flex flex-1 flex-col border-t-2 border-l-2 border-[#6c6c6c]">
        <SimulationCanvas />
        <SheetTabs />
      </div>
      <div className="w-[5px] border-l border-[#ddd] bg-[#f0f0f0]" />
      <aside className="flex w-[236px] flex-col border-l-2 border-[#8a8a8a] bg-[#f0f0f0] pr-1 pb-[2px] pl-[2px]">
        <div className="flex h-[15px] items-center gap-[2px]">
          <div className="ml-[2px] h-[6px] flex-1 border-t border-b border-[#999]"><div className="mt-px border-t-2 border-white" /></div>
          <button type="button" aria-label="Close tree" className="mr-[3px] flex h-[11px] w-[11px] items-center justify-center border-r border-b border-[#555]">
            <svg viewBox="0 0 7 7" className="h-[6px] w-[6px]"><path d="M0.500 0.500l6 6M6.500 0.500l-6 6" stroke="#000" strokeWidth="1.500" /></svg>
          </button>
        </div>
        <div className="flex flex-1 flex-col overflow-hidden border border-[#828790] bg-white px-1">
          <NetworkTree />
          <div className="mb-[3px] flex h-[19px] shrink-0 items-center bg-[#f0f0f0] pl-5"><div className="h-[6px] w-[146px] bg-[#858585]" /></div>
        </div>
      </aside>
      <div className="w-px bg-[#999]" />
      <div className="w-[3px] bg-[#eee]" />
    </div>
  </section>
);

const MeasurementWindow: React.FC = () => (
  <section className="absolute top-0 left-[772px] flex h-[588px] w-[500px] flex-col border border-[#bdbdbd] bg-white">
    <div className="flex h-9 items-center pl-[11px] pt-px">
      <MeasurementIcon />
      <h2 className="ml-1 text-black">Measurement Setup</h2>
      <WindowControls className="pr-[7px] text-[#c4c4c4]" />
    </div>
    <div className="mr-2 mb-[10px] ml-[6px] flex flex-1 border-y border-[#d4d4d4] pl-[3px]">
      <div className="flex-1 border-t-2 border-l-2 border-[#6c6c6c]" />
      <div className="w-[3px] border-l border-[#ddd] bg-[#f4f4f4]" />
    </div>
  </section>
);

const TRACE_COLUMNS = [
  { label: 'Time', width: 'w-[104px]' },
  { label: 'C...', width: 'w-[37px]' },
  { label: 'ID', width: 'w-[45px]' },
  { label: 'Name', width: 'w-[161px]' },
  { label: 'Event ...', width: 'w-[70px]' },
  { label: 'Dir', width: 'w-[43px]' },
  { label: 'DLC', width: 'w-[45px]' },
  { label: 'Data', width: 'w-[270px]' },
];

const TraceTable: React.FC = () => (
  <table className="w-[775px] table-fixed border-collapse text-left">
    <thead className="font-['Open_Sans',sans-serif] text-[15px]">
      <tr className="h-[29px]">
        {TRACE_COLUMNS.map((c) => (
          <th key={c.label} className={`border-r border-[#e2e2e2] bg-white pt-px pl-[6px] font-normal whitespace-nowrap ${c.width}`}>{c.label}</th>
        ))}
      </tr>
    </thead>
    <tbody className="font-['Liberation_Mono',monospace] text-xs">
      {TRACE_ROWS.map((row, i) => {
        const line = row.selected ? 'border-y border-dotted border-[#5b1a78] text-[#4fc52f]' : 'border-y border-transparent';
        const cell = `h-[18px] overflow-hidden pl-[3px] leading-4 whitespace-nowrap ${line}`;
        return (
          <tr key={i}>
            <td className="p-0">
              <div className="flex h-[18px] items-center">
                <svg viewBox="0 0 8 9" className="ml-1 h-[9px] w-2"><path d="M0.500 0.500h7v5h-3v3l-2-3h-2z" fill="none" stroke="#cfcfcf" /></svg>
                <span className="ml-2 flex"><Expander blue /></span>
                <span className="w-[7px] border-t border-dotted border-[#999]" />
                <TraceRowIcon />
                <span className={`ml-[2px] flex-1 ${cell} ${row.selected ? 'border-l' : 'border-l border-l-transparent'}`}>1.4...</span>
              </div>
            </td>
            <td className="p-0"><div className={cell}>C...</div></td>
            <td className="p-0"><div className={cell}>{row.id}</div></td>
            <td className="p-0"><div className={cell}>{row.name}</div></td>
            <td className="p-0"><div className={cell}>{row.event}</div></td>
            <td className="p-0"><div className={cell}>{row.dir}</div></td>
            <td className="p-0"><div className={cell}>2</div></td>
            <td className="p-0"><div className={`${cell} ${row.selected ? 'border-r' : ''}`}>{row.data}</div></td>
          </tr>
        );
      })}
    </tbody>
  </table>
);

const TraceToolbar: React.FC = () => (
  <div className="flex h-[26px] shrink-0 items-center bg-linear-to-b from-[#fcfcfc] to-[#f0f0f0] pl-px">
    <ToolButton label="Details"><ListInfoIcon /></ToolButton>
    <ToolButton label="Statistics"><ListChartIcon /></ToolButton>
    <ToolButton label="Differences"><ListArrowIcon /></ToolButton>
    <ToolButton label="Event filter"><FunnelMailIcon /></ToolButton>
    <ToolButton label="Column filter"><FunnelLoopIcon /></ToolButton>
    <ToolButton label="Find"><BinocularsIcon /></ToolButton>
    <Sep />
    <ToolButton label="Clear"><CrossIcon /></ToolButton>
    <ToolButton label="Clear list"><ListCrossIcon /></ToolButton>
    <ToolButton label="Pause"><PauseIcon c="#b4b4b4" /></ToolButton>
    <ToolButton label="Time mode"><DeltaIcon /></ToolButton>
    <ToolButton label="Scroll" className="w-6 border border-[#0a70c8] bg-[#cfe4f7]"><ListDownIcon /></ToolButton>
    <ToolButton label="Toggle filter" className="w-6 border border-[#0a70c8]"><FunnelListIcon /></ToolButton>
    <Sep />
    <div className="relative ml-1 h-6 w-40">
      <select aria-label="Search" className="h-full w-full appearance-none border border-[#8c8c8c] bg-white pl-1 font-['DejaVu_Sans',sans-serif] text-[13px] text-[#5a5a5a]">
        <option>&lt;Search&gt;</option>
      </select>
      <svg viewBox="0 0 10 6" className="pointer-events-none absolute top-[10px] right-[5px] h-[6px] w-[10px]"><path d="M0.500 0.500l4.500 4.500 4.500-4.500" fill="none" stroke="#555" /></svg>
    </div>
    <ToolButton label="Find previous" className="w-[25px]"><SearchPrevIcon /></ToolButton>
    <ToolButton label="Find next" className="w-[25px]"><SearchNextIcon /></ToolButton>
    <Sep />
    <ToolButton label="Back"><GrayArrow /></ToolButton>
    <ToolButton label="Forward" className="w-7"><GrayArrow flip /></ToolButton>
    <ToolButton label="Marker" className="w-8"><MarkerIcon /><Caret className="text-[#999]" /></ToolButton>
    <Sep />
    <ToolButton label="Windows"><WindowsMailIcon /></ToolButton>
    <ToolButton label="Export" className="w-[34px]"><FolderGlobeIcon /><Caret className="text-black" /></ToolButton>
    <ToolButton label="Split" className="w-[34px]"><SplitIcon /><Caret className="text-black" /></ToolButton>
    <ToolButton label="Font size" className="w-[34px]"><FontIcon /><Caret className="text-black" /></ToolButton>
    <ToolButton label="Layout" className="w-[34px]"><PanelIcon /><Caret className="text-black" /></ToolButton>
    <button type="button" aria-label="More" className="ml-auto flex h-full w-[14px] flex-col items-center justify-end gap-[2px] bg-linear-to-b from-[#f3f3f3] to-[#b0b0b0] pb-[3px]">
      <span className="h-px w-[5px] bg-black" /><Caret className="text-black" />
    </button>
  </div>
);

const TraceWindow: React.FC = () => (
  <section className="absolute top-[31px] left-[790px] flex h-[448px] w-[850px] flex-col border border-[#0a70c0] bg-[#fbfbfb] pb-2">
    <div className="flex h-9 shrink-0 items-center bg-white pl-[11px]">
      <TraceIcon />
      <h2 className="ml-[5px] font-['Open_Sans',sans-serif] text-[15px] text-[#1b74c4]">Trace</h2>
      <WindowControls className="pr-[7px] text-black" />
    </div>
    <div className="mx-2 flex flex-1 flex-col border border-l-0 border-[#d0d0d0] bg-white">
      <TraceToolbar />
      <div className="relative flex flex-1">
        <div className="flex w-3 flex-col items-center justify-start gap-2 bg-linear-to-r from-[#d8d8d8] to-[#6e6e6e] pt-[155px]">
          <svg viewBox="0 0 5 8" className="h-2 w-[5px]"><path d="M0.500 0.500v7L4.500 4z" fill="#888" stroke="#000" /></svg>
          <div className="h-[34px] border-l-2 border-dotted border-black" />
          <svg viewBox="0 0 5 8" className="h-2 w-[5px]"><path d="M0.500 0.500v7L4.500 4z" fill="#888" stroke="#000" /></svg>
        </div>
        <div className="ml-px flex w-[19px] justify-center bg-linear-to-r from-white to-[#dce6f3] pt-1 pr-[2px]">
          <span className="h-[66px] rotate-180 text-right font-['Open_Sans',sans-serif] text-[13px] leading-4 whitespace-nowrap [writing-mode:vertical-rl]">0:00:00:00</span>
        </div>
        <div className="ml-px flex-1 bg-white bg-[linear-gradient(#efefef,#efefef)] bg-[length:16px_100%] bg-no-repeat">
          <TraceTable />
        </div>
        {/* highlight frame drawn over the message list */}
        <div className="pointer-events-none absolute -top-[3px] right-[6px] left-[13px] h-[137px] rounded-sm border-[5px] border-[#ff1f10]" />
      </div>
    </div>
  </section>
);

const ConsoleWindow: React.FC = () => (
  <section className="absolute top-[52px] -right-4 left-[1377px] flex h-[709px] flex-col border border-[#bdbdbd] bg-white font-['Liberation_Sans',Arial,sans-serif] text-[13px] text-black">
    <h2 className="flex h-9 shrink-0 items-center pl-[246px] font-['Noto_Sans',sans-serif] text-sm">Console</h2>
    <div className="mb-2 ml-[6px] flex flex-1 flex-col border-y border-[#d0d0d0] bg-[#f0f0f0] pl-1">
      <div className="flex h-[29px] shrink-0 items-center bg-[#e4e4e4] pl-[251px]">
        <ToolButton label="Add" className="w-[29px]"><DocIcon kind="plus" /></ToolButton>
        <ToolButton label="Remove" className="w-[29px]"><DocIcon kind="cross" /></ToolButton>
        <ToolButton label="Edit" className="w-[29px]"><DocIcon kind="pen" /></ToolButton>
        <Sep className="mx-1 h-[26px] bg-[#8a8a8a]" />
        <ToolButton label="Record" className="w-[29px]"><TapeIcon kind="record" /></ToolButton>
        <ToolButton label="Stop" className="w-[29px]"><Ico><rect x="6" y="6" width="8" height="8" fill="url(#gGray)" stroke="#999" /><path d="M7 13h7" stroke="#777" strokeWidth="2" /></Ico></ToolButton>
        <ToolButton label="Step" className="w-[29px]"><Ico><path d="M6 6l5 4-5 4zM10 6l4 4-4 4z" fill="#aaa" stroke="#8c8c8c" /><path d="M14.500 5v10" stroke="#999" strokeWidth="2" /></Ico></ToolButton>
        <ToolButton label="Save" className="w-[29px]"><TapeIcon kind="save" /></ToolButton>
        <ToolButton label="Discard" className="w-[29px]"><TapeIcon kind="cross" /></ToolButton>
        <Sep className="mx-1 h-[26px] bg-[#8a8a8a]" />
        <ToolButton label="Open" className="w-[29px]"><FolderIcon /></ToolButton>
      </div>
      <div className="flex flex-1">
        <div className="flex w-[205px] shrink-0 flex-col border-2 border-r border-[#666] bg-[#f0f0f0]">
          <div className="flex h-[607px]">
            <ul className="w-[182px] overflow-hidden bg-white pt-[355px]">
              {SERVICES.map((s) => (
                <li key={s} className="relative flex h-5 items-center pl-2 whitespace-nowrap">
                  <span className="absolute top-0 bottom-0 left-[13px] border-l border-dotted border-[#888]" />
                  <ServiceExpander />
                  <span className="mr-1 w-[5px] shrink-0 border-t border-dotted border-[#888]" />
                  <ServiceIcon />
                  <span className="ml-[7px]">{s}</span>
                </li>
              ))}
            </ul>
            <div className="ml-2 h-[493px] w-[6px] bg-[#858585]" />
          </div>
          <div className="mt-[7px] ml-[21px] h-[6px] w-[103px] bg-[#858585]" />
        </div>
        <div className="ml-[5px] flex flex-1 flex-col">
          <div className="mt-[11px] h-6 shrink-0 border-t border-b-2 border-[#a0a0a0] border-b-white" />
          <div className="mt-[6px] h-[25px] shrink-0 border-y border-[#8c8c8c] bg-white" />
          <div className="mt-[7px] h-[99px] shrink-0 overflow-hidden border-t-2 border-l-2 border-[#6c6c6c] bg-white">
            <table className="w-full table-fixed border-collapse text-left">
              <thead>
                <tr className="h-[25px]">
                  <th className="w-[112px] border-r border-[#e2e2e2] pl-[27px] font-normal">Name</th>
                  <th className="w-[93px] border-r border-[#e2e2e2] pl-[5px] font-normal">
                    <span className="flex items-center gap-[11px]"><span className="h-[10px] w-[10px] bg-[#bdbdbd]" />Value</span>
                  </th>
                  <th className="w-[72px] border-r border-[#e2e2e2] pl-[6px] font-normal">Unit</th>
                  <th />
                </tr>
              </thead>
              <tbody>
                {[['PDU', '27 02 C5 96 ...'], ['Data', 'C5 96 6E E0'], ['', ''], ['', '']].map(([name, value], i) => (
                  <tr key={i} className="h-5 border-b border-[#efefef]">
                    <td className={`border-r border-[#efefef] pl-[27px] ${i === 1 ? 'bg-[#efefef]' : ''}`}>{name}</td>
                    <td className={`border-r border-[#efefef] pl-[6px] whitespace-nowrap ${i === 1 ? 'bg-[#efefef]' : ''}`}>{value}</td>
                    <td className={`border-r border-[#efefef] ${i === 1 ? 'bg-[#efefef]' : ''}`} />
                    <td />
                  </tr>
                ))}
              </tbody>
            </table>
          </div>
          <div className="mt-[3px] flex-1 border-t-2 border-l-2 border-[#6c6c6c] bg-white">
            <table className="w-full table-fixed border-collapse text-left">
              <thead>
                <tr className="h-[25px]">
                  <th className="w-[241px] border-r border-[#e2e2e2] pl-[29px] font-normal">Type/Parameter</th>
                  <th className="pl-[6px] font-normal">Service/Value</th>
                </tr>
              </thead>
              <tbody>
                {['[12:23:07]', '[12:23:09]'].map((t) => (
                  <tr key={t} className="h-5">
                    <td className="pl-[25px]">{t}</td>
                    <td className="overflow-hidden pl-[6px] whitespace-nowrap">Device 'BasicDiagnosticsEcu</td>
                  </tr>
                ))}
              </tbody>
            </table>
          </div>
        </div>
      </div>
    </div>
  </section>
);

const WritePanel: React.FC = () => (
  <footer className="flex shrink-0 flex-col bg-white">
    <div className="flex h-[22px] items-center border-t border-white bg-[#f0f0f0] pb-px pl-[21px]"><div className="h-[6px] flex-1 bg-[#858585]" /></div>
    <div className="bg-linear-to-b from-[#fdfdfd] to-[#f1f1f1] pt-[3px]">
      <h2 className="pl-1 font-['Open_Sans',sans-serif] text-[15px] leading-[24px] text-[#444]">Write</h2>
      <div className="flex h-7 items-center pb-[2px]">
        <ToolButton label="Pause"><PauseIcon c="#d9663e" /></ToolButton>
        <Sep className="mx-[3px] h-4 bg-[#c4c4c4]" />
        <ToolButton label="Clear"><CrossIcon /></ToolButton>
        <ToolButton label="Clear view"><Ico><rect x="1" y="2" width="17" height="12" fill="#a9c6e8" stroke="#3d5c98" strokeWidth="1.500" /><g transform="translate(1 2)"><CrossShape /></g></Ico></ToolButton>
        <ToolButton label="Clear log"><Ico><path d="M8 1h7l3 3v10H8z" fill="#f3f6fa" stroke="#3b3f66" /><path d="M1 4h6v3h9v11H1z" fill="#3d6db0" stroke="#2b4c86" /><g transform="translate(2 2)"><CrossShape /></g></Ico></ToolButton>
        <Sep className="mx-[2px] h-4 bg-[#c4c4c4]" />
        <ToolButton label="Find"><BinocularsIcon /></ToolButton>
        <ToolButton label="Copy"><Ico><path d="M1 2h7l3 3v9H1z" fill="#e3e3e3" stroke="#b5b5b5" /><path d="M8 6h7l4 4v8H8z" fill="#e9e9e9" stroke="#a5a5a5" /><path d="M10 11h6M10 14h6" stroke="#bbb" /></Ico></ToolButton>
        <ToolButton label="Export"><Ico><path d="M7 1h8l3 3v14H7z" fill="#f1f6fc" stroke="#3a4f88" strokeWidth="1.300" /><path d="M10 7h6M10 10h6M10 13h6" stroke="#57a5e6" strokeWidth="1.500" /><path d="M1 8h5V5l6 5.500L6 16v-3H1z" fill="#f79c38" stroke="#b2631a" /></Ico></ToolButton>
        <Sep className="mx-[3px] h-4 bg-[#c4c4c4]" />
        <ToolButton label="Open in browser"><FolderGlobeIcon /></ToolButton>
      </div>
    </div>
    <div className="flex h-[23px] font-['Liberation_Mono',monospace] text-[13px] leading-[26px]">
      <div className="w-[11px] bg-linear-to-r from-[#d8d8d8] to-[#6e6e6e]" />
      <div className="w-[22px] border-r border-[#dcdcdc]" />
      <div className="w-[90px] border-r border-[#dcdcdc] pl-[6px]">Source</div>
      <div className="w-[1166px] border-r border-[#dcdcdc] pl-[6px]">Message</div>
    </div>
  </footer>
);

const App: React.FC = () => (
  <div className="flex h-screen flex-col overflow-hidden font-['Noto_Sans',sans-serif] text-sm">
    <Gradients />
    <Ribbon />
    <main className="relative flex-1 overflow-hidden bg-[#c8d0e1]">
      <SimulationWindow />
      <MeasurementWindow />
      <ConsoleWindow />
      <TraceWindow />
    </main>
    <WritePanel />
  </div>
);

export default App;
